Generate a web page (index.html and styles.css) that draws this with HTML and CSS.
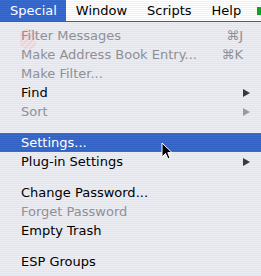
FILE: index.html
```html
<!DOCTYPE html>
<html lang="en">
<head>
    <meta charset="UTF-8">
    <meta name="viewport" content="width=device-width, initial-scale=1.0">
    <title>Special menu</title>
    <link rel="stylesheet" href="styles.css">
</head>
<body>
    <div class="screen">
        <header class="menubar">
            <span class="title active">Special</span>
            <span class="title">Window</span>
            <span class="title">Scripts</span>
            <span class="title">Help</span>
            <span class="status"></span>
        </header>

        <div class="menu">
            <div class="ghost"></div>

            <div class="item disabled"><span>Filter Messages</span><span class="key">&#8984;J</span></div>
            <div class="item disabled"><span>Make Address Book Entry...</span><span class="key">&#8984;K</span></div>
            <div class="item disabled"><span>Make Filter...</span></div>
            <div class="item"><span>Find</span><span class="arrow"></span></div>
            <div class="item disabled"><span>Sort</span><span class="arrow"></span></div>
            <div class="sep"></div>
            <div class="item selected"><span>Settings...</span></div>
            <div class="item"><span>Plug-in Settings</span><span class="arrow"></span></div>
            <div class="sep"></div>
            <div class="item"><span>Change Password...</span></div>
            <div class="item disabled"><span>Forget Password</span></div>
            <div class="item"><span>Empty Trash</span></div>
            <div class="sep"></div>
            <div class="item"><span>ESP Groups</span></div>
        </div>

        <svg class="cursor" width="12" height="19" viewBox="0 0 12 19">
            <path d="M1 1 L1 15 L4.5 11.5 L7 17 L9 16 L6.8 10.6 L11 10.6 Z" fill="#000" stroke="#fff" stroke-width="1" stroke-linejoin="round"/>
        </svg>
    </div>
</body>
</html>
```

FILE: styles.css
```css
body {
    margin: 0;
    padding: 0;
    font-family: "DejaVu Sans", Verdana, sans-serif;
    font-size: 13px;
    background-color: #e9ebf1;
}

.screen {
    position: relative;
    width: 261px;
    height: 276px;
    overflow: hidden;
}

.menubar {
    display: flex;
    align-items: center;
    height: 21px;
    border-bottom: 1px solid #5a5a5a;
    background: repeating-linear-gradient(to bottom, #ffffff 0, #ffffff 1px, #f1f1f3 1px, #f1f1f3 2px);
}

.title {
    padding: 0 10px;
    line-height: 21px;
    color: #000;
}

.title.active {
    padding: 0 9px 0 10px;
    color: #fff;
    background: repeating-linear-gradient(to bottom, #3a6bcf 0, #3a6bcf 1px, #3161c2 1px, #3161c2 2px);
}

.status {
    margin-left: auto;
    width: 4px;
    height: 8px;
    background-color: #12a21c;
}

.menu {
    position: relative;
    height: 252px;
    padding-top: 4px;
    border-bottom: 2px solid #22324f;
    background: repeating-linear-gradient(to bottom, #eceef4 0, #eceef4 1px, #e2e4ec 1px, #e2e4ec 2px);
    box-sizing: content-box;
}

.item {
    position: relative;
    z-index: 1;
    display: flex;
    align-items: center;
    justify-content: space-between;
    height: 19px;
    padding: 0 11px 0 21px;
    color: #000;
}

.item.disabled {
    color: #8f9096;
}

.item.selected {
    color: #fff;
    background: repeating-linear-gradient(to bottom, #3a6bcf 0, #3a6bcf 1px, #3161c2 1px, #3161c2 2px);
}

.key {
    margin-right: 7px;
}

.arrow {
    width: 0;
    height: 0;
    border-top: 4.5px solid transparent;
    border-bottom: 4.5px solid transparent;
    border-left: 7px solid #3a3a3a;
}

.disabled .arrow {
    border-left-color: #9a9ba1;
}

.sep {
    height: 12px;
}

.ghost {
    position: absolute;
    z-index: 0;
    left: 20px;
    top: 7px;
    width: 16px;
    height: 20px;
    border-radius: 6px;
    background: repeating-linear-gradient(135deg, #f2b9be 0, #f2b9be 2px, #ecdde2 2px, #ecdde2 4px);
    opacity: 0.45;
}

.cursor {
    position: absolute;
    z-index: 2;
    left: 161px;
    top: 142px;
}
```
